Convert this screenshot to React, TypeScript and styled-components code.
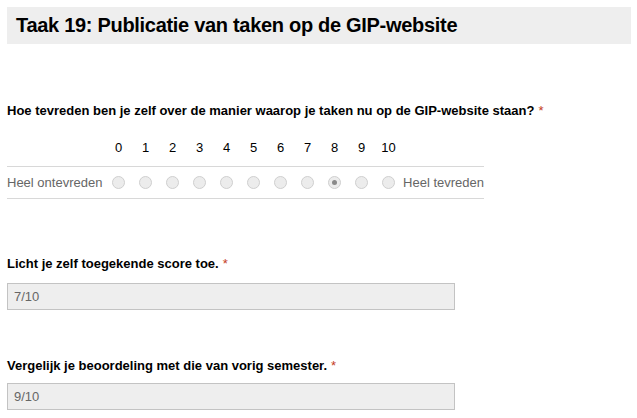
import React from "react";
import styled, { createGlobalStyle } from "styled-components";

const Global = createGlobalStyle`
  html, body { margin: 0; padding: 0; background: #fff; }
  body { font-family: Arial, "Liberation Sans", sans-serif; color: #000; }
`;

const Page = styled.div`
  padding: 7px 6px 0 7px;
  display: flex;
  flex-direction: column;
`;

const Header = styled.div`
  background: #eeeeee;
  height: 37px;
  display: flex;
  align-items: center;
  padding-left: 9px;
  font-size: 20px;
  font-weight: bold;
  letter-spacing: -0.3px;
  color: #000;
`;

const Question = styled.div<{ $top: number }>`
  margin-top: ${(p) => p.$top}px;
  display: flex;
  flex-direction: column;
`;

const Label = styled.div`
  font-size: 13px;
  font-weight: bold;
  color: #000;
  line-height: 16px;
`;

const Star = styled.span`
  color: #c43b1d;
  font-weight: normal;
  margin-left: 4px;
`;

const Scale = styled.div`
  margin-top: 21px;
  display: grid;
  grid-template-columns: 98px repeat(11, 27px) 82px;
  width: 477px;
  align-items: center;
`;

const NumCell = styled.div`
  font-size: 13px;
  color: #000;
  text-align: center;
  height: 26px;
  line-height: 16px;
  border-bottom: 1px solid #d8d8d8;
`;

const Blank = styled(NumCell)``;

const RowCell = styled.div<{ $align?: string }>`
  height: 31px;
  display: flex;
  align-items: center;
  justify-content: ${(p) => p.$align || "center"};
  font-size: 13px;
  color: #666;
  border-bottom: 1px solid #d8d8d8;
  white-space: nowrap;
`;

const Radio = styled.span<{ $checked?: boolean }>`
  width: 11px;
  height: 11px;
  border-radius: 50%;
  border: 1px solid #cfcfcf;
  background: #ececec;
  display: flex;
  align-items: center;
  justify-content: center;
  &::after {
    content: "";
    display: ${(p) => (p.$checked ? "block" : "none")};
    width: 5px;
    height: 5px;
    border-radius: 50%;
    background: #8a8a8a;
  }
`;

const Input = styled.div<{ $top: number }>`
  box-sizing: border-box;
  margin-top: ${(p) => p.$top}px;
  width: 448px;
  height: 27px;
  border: 1px solid #c3c3c3;
  background: #eeeeee;
  display: flex;
  align-items: center;
  padding-left: 6px;
  font-size: 13px;
  color: #666;
`;

const nums = Array.from({ length: 11 }, (_, i) => i);

export default function App() {
  return (
    <>
      <Global />
      <Page>
        <Header>Taak 19: Publicatie van taken op de GIP-website</Header>
        <Question $top={59}>
          <Label>
            Hoe tevreden ben je zelf over de manier waarop je taken nu op de GIP-website staan?
            <Star>*</Star>
          </Label>
          <Scale>
            <Blank />
            {nums.map((n) => (
              <NumCell key={n}>{n}</NumCell>
            ))}
            <Blank />
            <RowCell $align="flex-start">Heel ontevreden</RowCell>
            {nums.map((n) => (
              <RowCell key={n}>
                <Radio $checked={n === 8} />
              </RowCell>
            ))}
            <RowCell $align="flex-end">Heel tevreden</RowCell>
          </Scale>
        </Question>
        <Question $top={57}>
          <Label>
            Licht je zelf toegekende score toe.<Star>*</Star>
          </Label>
          <Input $top={11}>7/10</Input>
        </Question>
        <Question $top={48}>
          <Label>
            Vergelijk je beoordeling met die van vorig semester.<Star>*</Star>
          </Label>
          <Input $top={9}>9/10</Input>
        </Question>
      </Page>
    </>
  );
}
